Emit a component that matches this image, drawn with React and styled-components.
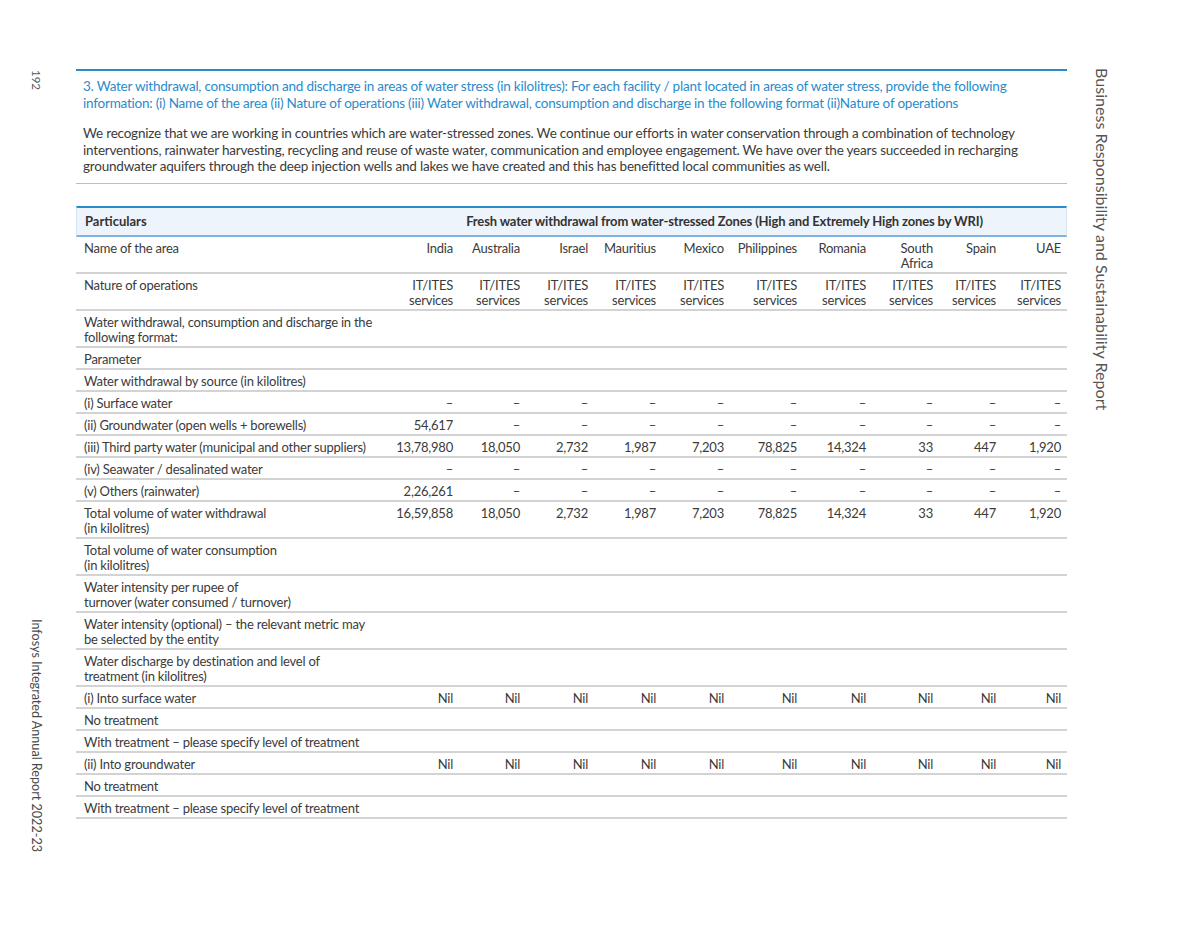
import React from 'react';
import styled, { createGlobalStyle } from 'styled-components';

const GlobalStyle = createGlobalStyle`
  html, body {
    margin: 0;
    padding: 0;
    background: #ffffff;
  }
  body {
    font-family: Lato, 'Open Sans', 'Liberation Sans', sans-serif;
    color: #3b3b3b;
  }
`;

const COLS = '306px 77px 67px 68px 68px 68px 73px 69px 67px 63px 65px';
const D = '–';

const countries = [
  ['India'],
  ['Australia'],
  ['Israel'],
  ['Mauritius'],
  ['Mexico'],
  ['Philippines'],
  ['Romania'],
  ['South', 'Africa'],
  ['Spain'],
  ['UAE'],
];

const dashes = Array(10).fill(D);
const nils = Array(10).fill('Nil');
const totals = ['16,59,858', '18,050', '2,732', '1,987', '7,203', '78,825', '14,324', '33', '447', '1,920'];

const rows = [
  { label: ['Water withdrawal, consumption and discharge in the', 'following format:'] },
  { label: ['Parameter'] },
  { label: ['Water withdrawal by source (in kilolitres)'] },
  { label: ['(i) Surface water'], values: dashes },
  { label: ['(ii) Groundwater (open wells + borewells)'], values: ['54,617', D, D, D, D, D, D, D, D, D] },
  {
    label: ['(iii) Third party water (municipal and other suppliers)'],
    values: ['13,78,980', '18,050', '2,732', '1,987', '7,203', '78,825', '14,324', '33', '447', '1,920'],
  },
  { label: ['(iv) Seawater / desalinated water'], values: dashes },
  { label: ['(v) Others (rainwater)'], values: ['2,26,261', D, D, D, D, D, D, D, D, D] },
  { label: ['Total volume of water withdrawal', '(in kilolitres)'], values: totals },
  { label: ['Total volume of water consumption', '(in kilolitres)'] },
  { label: ['Water intensity per rupee of', 'turnover (water consumed / turnover)'] },
  { label: ['Water intensity (optional) – the relevant metric may', 'be selected by the entity'] },
  { label: ['Water discharge by destination and level of', 'treatment (in kilolitres)'] },
  { label: ['(i) Into surface water'], values: nils },
  { label: ['No treatment'] },
  { label: ['With treatment – please specify level of treatment'] },
  { label: ['(ii) Into groundwater'], values: nils },
  { label: ['No treatment'] },
  { label: ['With treatment – please specify level of treatment'] },
];

const Lines = ({ lines }) =>
  lines.map((l, i) => (
    <React.Fragment key={i}>
      {i > 0 && <br />}
      {l}
    </React.Fragment>
  ));

const App = () => {
  return (
    <>
      <GlobalStyle />
      <Page>
        <LeftRail>
          <PageNo>192</PageNo>
          <RailText>Infosys Integrated Annual Report 2022-23</RailText>
        </LeftRail>

        <Main>
          <Intro>
            <Question>
              3. Water withdrawal, consumption and discharge in areas of water stress (in kilolitres): For each
              facility / plant located in areas of water stress, provide the following
              <br />
              information: (i) Name of the area (ii) Nature of operations (iii) Water withdrawal, consumption and
              discharge in the following format (ii)Nature of operations
            </Question>
            <Para>
              We recognize that we are working in countries which are water-stressed zones. We continue our efforts
              in water conservation through a combination of technology
              <br />
              interventions, rainwater harvesting, recycling and reuse of waste water, communication and employee
              engagement. We have over the years succeeded in recharging
              <br />
              groundwater aquifers through the deep injection wells and lakes we have created and this has benefitted
              local communities as well.
            </Para>
          </Intro>

          <Table>
            <HeadRow>
              <HeadCell>Particulars</HeadCell>
              <HeadTitle>Fresh water withdrawal from water-stressed Zones (High and Extremely High zones by WRI)</HeadTitle>
            </HeadRow>

            <Row>
              <Cell>Name of the area</Cell>
              {countries.map((c) => (
                <Cell $num key={c.join(' ')}>
                  <Lines lines={c} />
                </Cell>
              ))}
            </Row>

            <Row>
              <Cell>Nature of operations</Cell>
              {countries.map((c) => (
                <Cell $num key={c.join(' ')}>
                  IT/ITES
                  <br />
                  services
                </Cell>
              ))}
            </Row>

            {rows.map((r, idx) => (
              <Row key={idx}>
                <Cell>
                  <Lines lines={r.label} />
                </Cell>
                {(r.values || Array(10).fill('')).map((v, i) => (
                  <Cell $num key={i}>
                    {v}
                  </Cell>
                ))}
              </Row>
            ))}
          </Table>
        </Main>

        <RightRail>
          <SectionTitle>Business Responsibility and Sustainability Report</SectionTitle>
        </RightRail>
      </Page>
    </>
  );
};

const Page = styled.div`
  display: flex;
  width: 1200px;
  min-height: 927px;
  box-sizing: border-box;
  padding-top: 69px;
`;

const LeftRail = styled.div`
  width: 76px;
  flex-shrink: 0;
  display: flex;
  flex-direction: column;
  justify-content: space-between;
  align-items: center;
  padding: 0 4px 75px 0;
  box-sizing: border-box;
`;

const PageNo = styled.div`
  writing-mode: vertical-rl;
  font-size: 11.5px;
  color: #5a5a5a;
  margin-top: 1px;
`;

const RailText = styled.div`
  writing-mode: vertical-rl;
  font-size: 12.6px;
  color: #4a4a4a;
`;

const Main = styled.div`
  width: 991px;
  flex-shrink: 0;
`;

const Intro = styled.div`
  border-top: 2px solid #2a8bcb;
  border-bottom: 1px solid #bdbdbd;
  padding: 7px 7px 8px;
`;

const Question = styled.p`
  margin: 0;
  font-size: 13.5px;
  line-height: 16.5px;
  color: #2a8bcb;
  white-space: nowrap;
  letter-spacing: -0.22px;
`;

const Para = styled.p`
  margin: 14px 0 0;
  font-size: 13.5px;
  line-height: 16.5px;
  color: #3b3b3b;
  white-space: nowrap;
  letter-spacing: -0.2px;
`;

const Table = styled.div`
  margin-top: 22px;
`;

const HeadRow = styled.div`
  display: grid;
  grid-template-columns: 306px 1fr;
  background: #eef4fb;
  border-top: 2px solid #2a8bcb;
  border-bottom: 2px solid #7fb2dc;
  border-left: 1px solid #d6e5f3;
  border-right: 1px solid #d6e5f3;
`;

const HeadCell = styled.div`
  padding: 6px 8px;
  font-size: 13px;
  line-height: 15px;
  font-weight: 700;
  color: #333333;
`;

const HeadTitle = styled(HeadCell)`
  text-align: center;
  padding-left: 0;
  padding-right: 0;
  white-space: nowrap;
  letter-spacing: -0.15px;
`;

const Row = styled.div`
  display: grid;
  grid-template-columns: ${COLS};
  border-bottom: 2px solid #d3d3d3;
`;

const Cell = styled.div`
  padding: 4px ${(p) => (p.$num ? '6px' : '8px')} 1px;
  font-size: 13px;
  line-height: 15px;
  color: #3b3b3b;
  text-align: ${(p) => (p.$num ? 'right' : 'left')};
  white-space: nowrap;
  letter-spacing: -0.22px;
`;

const RightRail = styled.div`
  flex: 1;
  padding-left: 26px;
`;

const SectionTitle = styled.div`
  writing-mode: vertical-rl;
  font-size: 16.1px;
  color: #555555;
  margin-top: -1px;
`;

export default App;
